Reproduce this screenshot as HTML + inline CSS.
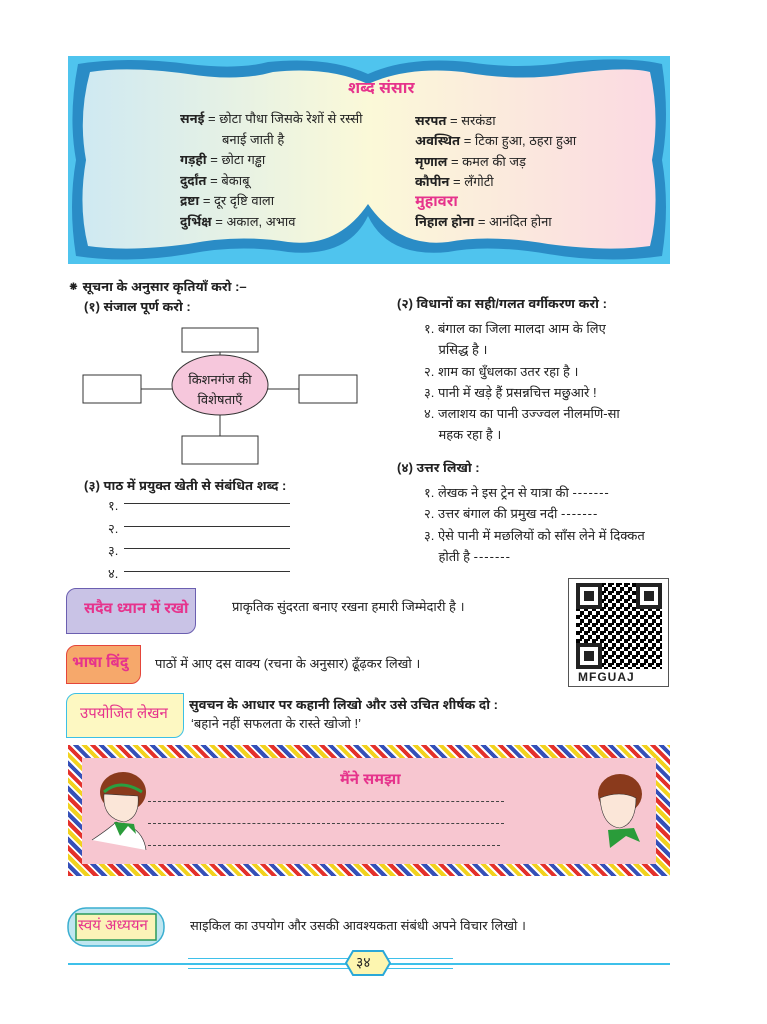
<!DOCTYPE html>
<html><head><meta charset="utf-8"><style>
*{margin:0;padding:0;box-sizing:border-box}
body{width:767px;height:1024px;background:#fff;position:relative;font-family:"Liberation Sans","Noto Sans Devanagari","Lohit Devanagari",sans-serif;color:#222;font-size:13px;overflow:hidden}
.a{position:absolute;white-space:nowrap}
.b{font-weight:bold}
.pk{color:#e6338c}
.ds{letter-spacing:1px}
</style></head><body>
<svg class="a" style="left:68px;top:56px" width="602" height="208" viewBox="0 0 602 208">
<defs><linearGradient id="g" x1="0" x2="1"><stop offset="0" stop-color="#cfe9f2"/><stop offset=".5" stop-color="#fbf9d8"/><stop offset="1" stop-color="#fbd9e2"/></linearGradient></defs>
<rect width="602" height="208" fill="#4fc4ee"/>
<path d="M10 8 Q60 0 120 8 Q170 14 200 6 Q260 0 300 18 Q340 0 400 6 Q450 14 500 6 Q560 0 594 8 Q602 60 594 104 Q602 150 594 200 Q540 208 480 198 Q420 188 380 196 Q320 202 300 160 Q280 202 220 196 Q170 188 120 198 Q60 208 8 200 Q0 150 8 104 Q0 60 10 8Z" fill="#2a8cc6"/>
<path d="M22 16 Q60 10 120 18 Q170 26 205 16 Q260 10 300 28 Q340 10 395 16 Q450 26 500 18 Q560 10 582 16 Q592 60 584 104 Q592 150 582 190 Q540 196 480 188 Q420 178 380 186 Q330 192 300 148 Q270 192 220 186 Q170 178 120 188 Q60 196 20 190 Q10 150 18 104 Q10 60 22 16Z" fill="url(#g)"/>
</svg>
<div class="a b pk" style="left:348px;top:79px;font-size:16px">शब्द संसार</div>
<div class="a" style="left:180px;top:109px;line-height:20.5px">
<b>सनई</b> = छोटा पौधा जिसके रेशों से रस्सी<br><span style="padding-left:42px">बनाई जाती है</span><br><b>गड़ही</b> = छोटा गड्ढा<br><b>दुर्दांत</b> = बेकाबू<br><b>द्रष्टा</b> = दूर दृष्टि वाला<br><b>दुर्भिक्ष</b> = अकाल, अभाव</div>
<div class="a" style="left:415px;top:111px;line-height:20.3px">
<b>सरपत</b> = सरकंडा<br><b>अवस्थित</b> = टिका हुआ, ठहरा हुआ<br><b>मृणाल</b> = कमल की जड़<br><b>कौपीन</b> = लँगोटी<br><b class="pk" style="font-size:15px">मुहावरा</b><br><b>निहाल होना</b> = आनंदित होना</div>

<div class="a b" style="left:68px;top:279px">⁕ सूचना के अनुसार कृतियाँ करो :–</div>
<div class="a b" style="left:84px;top:299px">(१) संजाल पूर्ण करो :</div>
<svg class="a" style="left:80px;top:325px" width="282" height="142">
<g stroke="#333" fill="#fff"><line x1="140" y1="27" x2="140" y2="111"/><line x1="61" y1="64" x2="219" y2="64"/>
<rect x="102" y="3" width="76" height="24"/><rect x="3" y="50" width="58" height="28"/><rect x="219" y="50" width="58" height="28"/><rect x="102" y="111" width="76" height="28"/>
<ellipse cx="140" cy="60" rx="48" ry="30" fill="#f6c7dc"/></g></svg>
<div class="a" style="left:185px;top:370px;text-align:center;width:70px;line-height:20px">किशनगंज की<br>विशेषताएँ</div>

<div class="a b" style="left:84px;top:478px">(३) पाठ में प्रयुक्त खेती से संबंधित शब्द :</div>
<div class="a" style="left:108px;top:495px;line-height:22.5px">१.<br>२.<br>३.<br>४.</div>
<div class="a" style="left:124px;top:503px;width:166px;border-top:1px solid #333"></div>
<div class="a" style="left:124px;top:526px;width:166px;border-top:1px solid #333"></div>
<div class="a" style="left:124px;top:548px;width:166px;border-top:1px solid #333"></div>
<div class="a" style="left:124px;top:571px;width:166px;border-top:1px solid #333"></div>

<div class="a b" style="left:397px;top:296px">(२) विधानों का सही/गलत वर्गीकरण करो :</div>
<div class="a" style="left:424px;top:318px;line-height:21.3px">१. बंगाल का जिला मालदा आम के लिए<br>&nbsp;&nbsp;&nbsp;&nbsp;प्रसिद्ध है ।<br>२. शाम का धुँधलका उतर रहा है ।<br>३. पानी में खड़े हैं प्रसन्नचित्त मछुआरे !<br>४. जलाशय का पानी उज्ज्वल नीलमणि-सा<br>&nbsp;&nbsp;&nbsp;&nbsp;महक रहा है ।</div>
<div class="a b" style="left:397px;top:460px">(४) उत्तर लिखो :</div>
<div class="a" style="left:424px;top:482px;line-height:21.3px">१. लेखक ने इस ट्रेन से यात्रा की <span class="ds">-------</span><br>२. उत्तर बंगाल की प्रमुख नदी <span class="ds">-------</span><br>३. ऐसे पानी में मछलियों को साँस लेने में दिक्कत<br>&nbsp;&nbsp;&nbsp;&nbsp;होती है <span class="ds">-------</span></div>

<div class="a" style="left:66px;top:588px;width:130px;height:46px;background:#c9c3e6;border:1.5px solid #6b5fb0;border-radius:10px 0 10px 0"></div>
<div class="a b pk" style="left:84px;top:600px;font-size:15px">सदैव ध्यान में रखो</div>
<div class="a" style="left:232px;top:599px">प्राकृतिक सुंदरता बनाए रखना हमारी जिम्मेदारी है ।</div>
<div class="a" style="left:568px;top:578px;width:101px;height:109px;border:1.5px solid #555;background:#fff"></div>
<svg class="a" style="left:576px;top:583px" width="86" height="86"><defs><pattern id="q" width="8" height="8" patternUnits="userSpaceOnUse"><rect width="4" height="4"/><rect x="4" y="4" width="4" height="4"/><rect x="4" width="2" height="2"/></pattern></defs>
<rect width="86" height="86" fill="url(#q)"/><g fill="#fff" stroke="#222" stroke-width="4"><rect x="2" y="2" width="22" height="22"/><rect x="62" y="2" width="22" height="22"/><rect x="2" y="62" width="22" height="22"/></g><g fill="#222"><rect x="8" y="8" width="10" height="10"/><rect x="68" y="8" width="10" height="10"/><rect x="8" y="68" width="10" height="10"/></g></svg>
<div class="a b" style="left:578px;top:670px;font-size:12px;letter-spacing:1px">MFGUAJ</div>

<div class="a" style="left:66px;top:645px;width:75px;height:39px;background:#f6a86b;border:1.5px solid #e4453a;border-radius:10px 0 10px 0"></div>
<div class="a b pk" style="left:72px;top:654px;font-size:15px">भाषा बिंदु</div>
<div class="a" style="left:155px;top:656px">पाठों में आए दस वाक्य (रचना के अनुसार) ढूँढ़कर लिखो ।</div>

<div class="a" style="left:66px;top:693px;width:118px;height:45px;background:#fdf8c2;border:1.5px solid #3cc0e6;border-radius:10px 0 10px 0"></div>
<div class="a pk" style="left:80px;top:705px;font-size:15px">उपयोजित लेखन</div>
<div class="a b" style="left:189px;top:697px">सुवचन के आधार पर कहानी लिखो और उसे उचित शीर्षक दो :</div>
<div class="a" style="left:191px;top:716px">‘बहाने नहीं सफलता के रास्ते खोजो !’</div>

<div class="a" style="left:68px;top:745px;width:602px;height:131px;background:repeating-linear-gradient(45deg,#e4312b 0 4px,#fff 4px 6px,#3550b8 6px 10px,#fff 10px 12px,#f2d21e 12px 16px,#fff 16px 18px)"></div>
<div class="a" style="left:82px;top:758px;width:574px;height:106px;background:#f7c6d0"></div>
<div class="a b pk" style="left:340px;top:771px;font-size:15px">मैंने समझा</div>
<div class="a" style="left:148px;top:801px;width:356px;border-top:1px dashed #444"></div>
<div class="a" style="left:148px;top:823px;width:356px;border-top:1px dashed #444"></div>
<div class="a" style="left:148px;top:845px;width:352px;border-top:1px dashed #444"></div>
<svg class="a" style="left:90px;top:770px" width="60" height="80"><ellipse cx="33" cy="22" rx="23" ry="20" fill="#8a3a1c"/><path d="M14 24 Q12 48 34 52 Q50 48 48 26Z" fill="#fbe6d8" stroke="#333" stroke-width=".6"/><path d="M14 22 Q30 8 52 22" stroke="#2aa040" stroke-width="3" fill="none"/><path d="M2 70 Q20 58 26 52 L40 56 Q54 64 56 80" fill="#fff" stroke="#333" stroke-width=".7"/><path d="M24 52 L30 66 L38 56 L46 64 L44 54Z" fill="#2a9c3a"/></svg>
<svg class="a" style="left:590px;top:772px" width="60" height="80"><ellipse cx="30" cy="22" rx="22" ry="20" fill="#8a3a1c"/><path d="M10 26 Q12 54 30 56 Q46 52 46 26 Q30 18 10 26Z" fill="#fbe6d8" stroke="#333" stroke-width=".6"/><path d="M18 58 L20 76 L36 64 L50 70 L44 56Z" fill="#2a9c3a"/></svg>

<svg class="a" style="left:66px;top:906px" width="100" height="42"><rect x="2" y="2" width="96" height="38" rx="18" fill="#bfe6f0" stroke="#3aaed0" stroke-width="1.5"/><rect x="10" y="8" width="80" height="26" fill="#fbf3b8" stroke="#2a9a5a" stroke-width="1.5"/></svg>
<div class="a pk" style="left:78px;top:917px;font-size:15px">स्वयं अध्ययन</div>
<div class="a" style="left:190px;top:918px">साइकिल का उपयोग और उसकी आवश्यकता संबंधी अपने विचार लिखो ।</div>

<div class="a" style="left:68px;top:963px;width:602px;border-top:2px solid #3ec0ea"></div>
<div class="a" style="left:188px;top:958px;width:265px;height:11px;border-top:1px solid #3ec0ea;border-bottom:1px solid #3ec0ea"></div>
<svg class="a" style="left:345px;top:950px" width="46" height="26"><polygon points="8,1 38,1 45,13 38,25 8,25 1,13" fill="#fdf6b0" stroke="#2aa8d8" stroke-width="2"/></svg>
<div class="a" style="left:356px;top:954px;font-size:14px">३४</div>
</body></html>
